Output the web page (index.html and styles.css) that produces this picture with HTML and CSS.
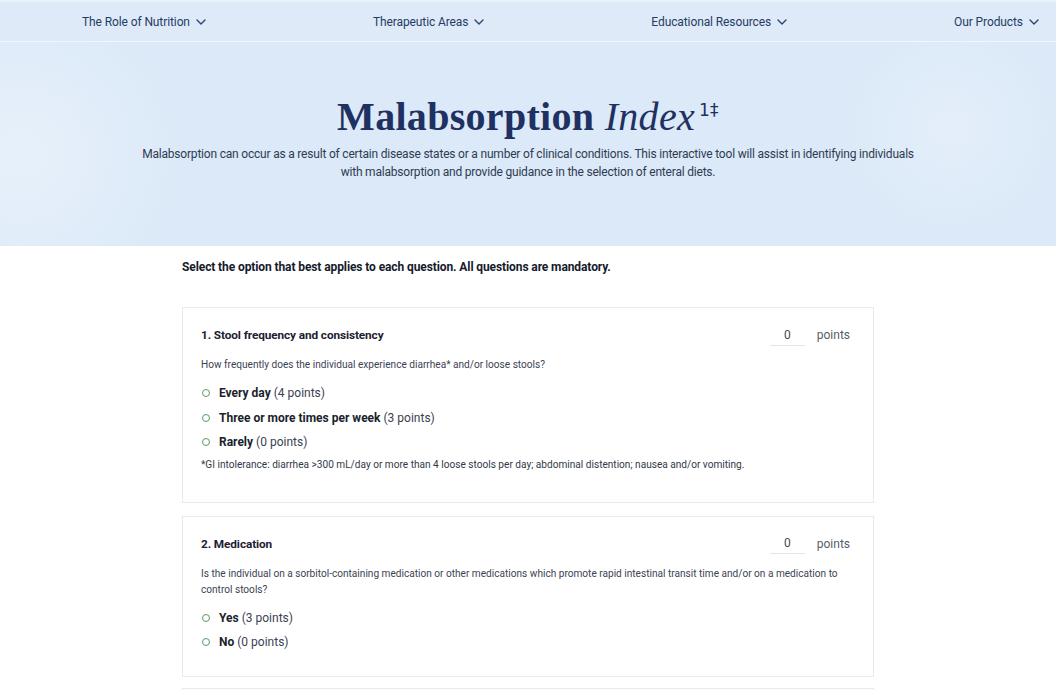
FILE: index.html
```html
<!DOCTYPE html>
<html lang="en">
<head>
<meta charset="utf-8">
<title>Malabsorption Index</title>
<link rel="stylesheet" href="styles.css">
</head>
<body>
<nav class="nav">
  <a class="nav-item" href="#">The Role of Nutrition <svg class="chev" viewBox="0 0 10 6" width="10" height="6"><path d="M1 1l4 4 4-4" fill="none" stroke="currentColor" stroke-width="1.4" stroke-linecap="round" stroke-linejoin="round"/></svg></a>
  <a class="nav-item" href="#">Therapeutic Areas <svg class="chev" viewBox="0 0 10 6" width="10" height="6"><path d="M1 1l4 4 4-4" fill="none" stroke="currentColor" stroke-width="1.4" stroke-linecap="round" stroke-linejoin="round"/></svg></a>
  <a class="nav-item" href="#">Educational Resources <svg class="chev" viewBox="0 0 10 6" width="10" height="6"><path d="M1 1l4 4 4-4" fill="none" stroke="currentColor" stroke-width="1.4" stroke-linecap="round" stroke-linejoin="round"/></svg></a>
  <a class="nav-item" href="#">Our Products <svg class="chev" viewBox="0 0 10 6" width="10" height="6"><path d="M1 1l4 4 4-4" fill="none" stroke="currentColor" stroke-width="1.4" stroke-linecap="round" stroke-linejoin="round"/></svg></a>
</nav>

<header class="hero">
  <h1 class="title"><span class="title-bold">Malabsorption</span> <em class="title-ital">Index</em><sup class="title-sup">1‡</sup></h1>
  <p class="lead">Malabsorption can occur as a result of certain disease states or a number of clinical conditions. This interactive tool will assist in identifying individuals with malabsorption and provide guidance in the selection of enteral diets.</p>
</header>

<main class="main">
  <p class="instr">Select the option that best applies to each question. All questions are mandatory.</p>

  <section class="card card-first">
    <div class="card-head">
      <h2 class="q-title">1. Stool frequency and consistency</h2>
      <div class="score"><span class="score-val">0</span><span class="score-lbl">points</span></div>
    </div>
    <p class="q-text">How frequently does the individual experience diarrhea* and/or loose stools?</p>
    <ul class="opts">
      <li class="opt"><span class="radio"></span><b>Every day</b> (4 points)</li>
      <li class="opt"><span class="radio"></span><b>Three or more times per week</b> (3 points)</li>
      <li class="opt"><span class="radio"></span><b>Rarely</b> (0 points)</li>
    </ul>
    <p class="note">*GI intolerance: diarrhea &gt;300 mL/day or more than 4 loose stools per day; abdominal distention; nausea and/or vomiting.</p>
  </section>

  <section class="card">
    <div class="card-head">
      <h2 class="q-title">2. Medication</h2>
      <div class="score"><span class="score-val">0</span><span class="score-lbl">points</span></div>
    </div>
    <p class="q-text">Is the individual on a sorbitol-containing medication or other medications which promote rapid intestinal transit time and/or on a medication to control stools?</p>
    <ul class="opts">
      <li class="opt"><span class="radio"></span><b>Yes</b> (3 points)</li>
      <li class="opt"><span class="radio"></span><b>No</b> (0 points)</li>
    </ul>
  </section>

  <section class="card card-stub"></section>
</main>
</body>
</html>
```
FILE: styles.css
```css
* { box-sizing: border-box; }
html, body { margin: 0; padding: 0; }
body {
  font-family: Roboto, "Noto Sans", "Liberation Sans", sans-serif;
  color: #1c2233;
  background: #ffffff;
  overflow: hidden;
}
.nav {
  height: 42px;
  background: #dfeaf8;
  border-top: 2px solid #ecf2fa;
  border-bottom: 1px solid #f2f6fc;
  display: flex;
  align-items: center;
  justify-content: space-between;
  padding: 0 17px 0 82px;
}
.nav-item {
  font-size: 12px;
  color: #253c66;
  text-decoration: none;
  display: flex;
  align-items: center;
  gap: 6px;
  letter-spacing: -0.1px;
}
.chev { color: #2d4470; }
.hero {
  height: 204px;
  background: radial-gradient(circle at 2% 55%, rgba(255,255,255,0.35) 0, rgba(255,255,255,0) 16%),
              radial-gradient(circle at 90% 42%, rgba(255,255,255,0.25) 0, rgba(255,255,255,0) 12%),
              #dbe9f8;
  display: flex;
  flex-direction: column;
  align-items: center;
  padding-top: 44px;
}
.title {
  margin: 0;
  font-family: "Liberation Serif", "DejaVu Serif", serif;
  font-size: 40px;
  line-height: 48px;
  color: #1e3161;
  font-weight: 700;
  letter-spacing: 0.3px;
}
.title-ital { font-weight: 400; font-style: italic; }
.title-sup { font-size: 17px; font-weight: 400; vertical-align: 14px; margin-left: 4px; font-family: "DejaVu Sans", sans-serif; }
.lead {
  margin: 4px 0 0;
  width: 790px;
  text-align: center;
  font-size: 12px;
  line-height: 18px;
  color: #2f3b52;
  letter-spacing: -0.2px;
}
.main {
  width: 692px;
  margin: 0 auto;
}
.instr {
  margin: 13px 0 0;
  font-size: 12px;
  line-height: 16px;
  font-weight: 700;
  color: #151b2c;
  letter-spacing: -0.1px;
}
.card {
  border: 1px solid #e6e9ee;
  background: #fff;
  padding: 17px 18px 21px;
  margin-top: 13px;
}
.card-first { margin-top: 32px; }
.card-head {
  display: flex;
  align-items: center;
  justify-content: space-between;
  height: 20px;
}
.q-title {
  margin: 0;
  font-size: 11.8px;
  font-weight: 700;
  color: #1b2130;
  letter-spacing: -0.1px;
}
.score { display: flex; align-items: center; gap: 12px; padding-right: 5px; }
.score-val {
  width: 35px;
  text-align: center;
  font-size: 12px;
  color: #444c5a;
  border-bottom: 1px solid #e1e4ea;
  padding-bottom: 3px;
  padding-top: 3px;
}
.score-lbl { font-size: 12px; color: #565e6c; }
.q-text {
  margin: 12px 0 0;
  font-size: 10.1px;
  line-height: 16px;
  color: #3c4453;
  padding-right: 4px;
}
.opts { list-style: none; margin: 8px 0 0; padding: 0; }
.opt {
  display: flex;
  align-items: center;
  height: 24.5px;
  font-size: 12px;
  color: #3a4252;
}
.opt b { color: #1a1f2c; font-weight: 700; margin-right: 3px; }
.radio {
  width: 8px;
  height: 8px;
  border: 1px solid #5c9a6a;
  border-radius: 50%;
  margin: 0 9px 0 1px;
  flex: none;
}
.note {
  margin: 4px 0 10px;
  font-size: 10.1px;
  line-height: 12px;
  color: #323a48;
}
.card-stub { height: 20px; padding: 0; margin-top: 11px; }
```
